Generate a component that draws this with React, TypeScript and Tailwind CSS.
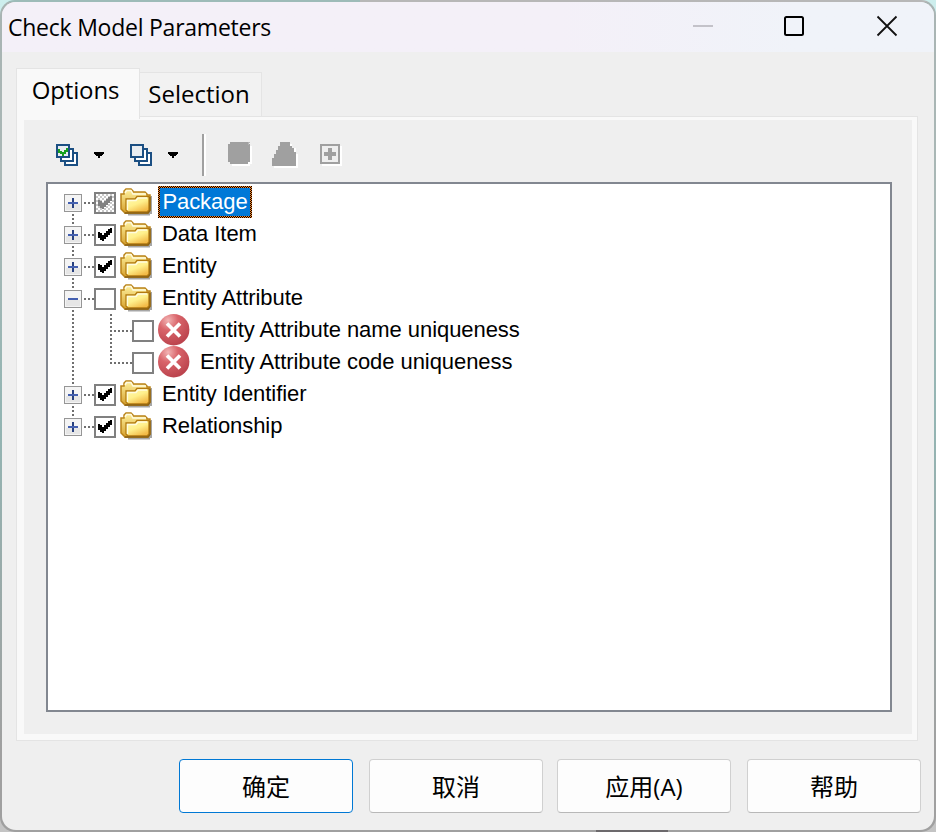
import React from "react";

const ui = "font-['Open_Sans','Noto_Sans_CJK_SC',sans-serif]";

function Folder() {
  return (
    <svg width="32" height="32" viewBox="0 0 32 32" className="shrink-0">
      <defs>
        <linearGradient id="front" x1="0" y1="0" x2="0.6" y2="1">
          <stop offset="0" stopColor="#fffbb4" />
          <stop offset="0.55" stopColor="#fff08c" />
          <stop offset="1" stopColor="#f3bb48" />
        </linearGradient>
        <linearGradient id="back" x1="0" y1="0" x2="0" y2="1">
          <stop offset="0" stopColor="#fff3a0" />
          <stop offset="1" stopColor="#d6a02c" />
        </linearGradient>
      </defs>
      <path d="M4 26V28H8V29.500H30V28H32V10H29V26Z" fill="#a6a6a6" />
      <path d="M1 8H4V5L6 3H11L13 5V6H25L27 8V9H30V24L28 27H5L1 23Z" fill="url(#back)" stroke="#b98218" strokeWidth="1.5" />
      <path d="M5 7L6.500 4.500H11L13 8H26" fill="none" stroke="#fffbe0" strokeWidth="1.500" />
      <path d="M6 13H15L17 10.500H29V24L27 26H8L6 24Z" fill="url(#front)" stroke="#b37a10" strokeWidth="1.3" />
      <path d="M7.500 24V14.500H16L18 12H27" fill="none" stroke="#fffce0" strokeWidth="1.300" />
      <path d="M5 27H28L30 24.500V11" fill="none" stroke="#8a6114" strokeWidth="1.3" />
    </svg>
  );
}

function ErrorIcon() {
  return (
    <svg width="32" height="32" viewBox="0 0 32 32" className="shrink-0">
      <defs>
        <radialGradient id="ball" cx="0.32" cy="0.2" r="0.8">
          <stop offset="0" stopColor="#f2b4b4" />
          <stop offset="0.4" stopColor="#d9646a" />
          <stop offset="1" stopColor="#bc444e" />
        </radialGradient>
      </defs>
      <circle cx="15.700" cy="15.700" r="15.700" fill="url(#ball)" />
      <path d="M9 9.500L22 22.500M22 9.500L9 22.500" stroke="#fff" strokeWidth="3.6" />
    </svg>
  );
}

function Check({ state }: { state: string }) {
  const color = state === "mixed" ? "#808080" : "#000";
  return (
    <svg width="22" height="32" viewBox="0 0 22 32" className="shrink-0" shapeRendering="crispEdges">
      <defs>
        <pattern id="mix" width="4" height="4" patternUnits="userSpaceOnUse">
          <path d="M0 0h2v2h-2zM2 2h2v2h-2z" fill="#c8c8c8" />
        </pattern>
      </defs>
      <rect x="1" y="7" width="20" height="20" fill="#fff" stroke="#808080" strokeWidth="2" />
      {state === "mixed" && <rect x="2" y="8" width="18" height="18" fill="url(#mix)" />}
      {state !== "off" && (
        <path d="M4 14H6V15H8V17H10V15H12V13H14V11H16V10H18V15H16V17H14V19H12V21H10V23H8V22H6V20H4Z" fill={color} />
      )}
    </svg>
  );
}

const dash = { stroke: "#6f6f6f", strokeWidth: 2, strokeDasharray: "2 2" };

function Expander({ open, first, last }: { open?: boolean; first?: boolean; last?: boolean }) {
  return (
    <svg width="30" height="32" viewBox="0 0 30 32" className="shrink-0" shapeRendering="crispEdges">
      {!first && <path d="M9 0V8" {...dash} />}
      {!last && <path d="M9 28V32" {...dash} />}
      <path d="M20 17H30" {...dash} />
      <rect x="0.5" y="8.5" width="17" height="17" fill="#f4f4f4" stroke="#969696" />
      <path d="M2 18H16V24H2Z" fill="#e6e6e6" />
      {!open && <path d="M9 12V22" stroke="#27407f" strokeWidth="2" />}
      <path d="M4 17H14" stroke="#4460b0" strokeWidth="2" />
    </svg>
  );
}

function ChildLines({ last }: { last?: boolean }) {
  return (
    <svg width="68" height="32" viewBox="0 0 68 32" className="shrink-0" shapeRendering="crispEdges">
      <path d="M9 0V32" {...dash} />
      <path d={last ? "M47 0V18" : "M47 0V32"} {...dash} />
      <path d="M50 17H68" {...dash} />
    </svg>
  );
}

function FocusFrame() {
  return (
    <svg width="94" height="32" viewBox="0 0 94 32" className="absolute inset-0" shapeRendering="crispEdges">
      <defs>
        <pattern id="dither" width="2" height="2" patternUnits="userSpaceOnUse">
          <rect width="2" height="2" fill="#000" />
          <path d="M0 0h1v1h-1zM1 1h1v1h-1z" fill="#ff8728" />
        </pattern>
      </defs>
      <path d="M0 0H94V32H0ZM2 2V30H92V2Z" fillRule="evenodd" fill="url(#dither)" />
    </svg>
  );
}

const rows = [
  { label: "Package", state: "mixed", first: true, selected: true },
  { label: "Data Item", state: "on" },
  { label: "Entity", state: "on" },
  { label: "Entity Attribute", state: "off", open: true },
  { label: "Entity Attribute name uniqueness", state: "off", child: true },
  { label: "Entity Attribute code uniqueness", state: "off", child: true, last: true },
  { label: "Entity Identifier", state: "on" },
  { label: "Relationship", state: "on", last: true },
];

function Stack({ checked }: { checked?: boolean }) {
  return (
    <svg width="22" height="22" viewBox="0 0 22 22" className="shrink-0" shapeRendering="crispEdges">
      <g fill="#fff" stroke="#1b4f83" strokeWidth="2">
        <rect x="9" y="9" width="12" height="12" />
        <rect x="5" y="5" width="12" height="12" />
        <rect x="1" y="1" width="12" height="12" fill="#e9edf1" />
      </g>
      {checked && <path d="M2 5H4V7H6V8H8V6H10V4H12V8H10V10H8V12H6V10H4V9H2Z" fill="#17a01f" />}
    </svg>
  );
}

function Caret() {
  return (
    <svg width="10" height="6" viewBox="0 0 10 6" shapeRendering="crispEdges">
      <path d="M0 0H10V2H9V3H8V4H6V6H4V4H2V3H1V2H0Z" />
    </svg>
  );
}

const button = "h-[54px] w-[174px] rounded border bg-[#fdfdfd]";

export default function App() {
  return (
    <div className="h-[832px] w-[936px] overflow-hidden bg-[linear-gradient(#cdeeed,#c4dddb_50%,#c4c4c4_90%)]">
      <div className="h-[832px] w-[936px] rounded-[15px] bg-[linear-gradient(#6c696c,#6c696c),linear-gradient(90deg,#9dbbb8_360px,#b7b7b7_360px),linear-gradient(#a9b4b3,#a9b8b6_25%,#93b5b3_50%,#a0a0a0_90%)] bg-[length:72px_2px,100%_2px,100%_100%] bg-[position:596px_830px,0_0,0_0] bg-no-repeat p-0.5">
        <div className="flex h-[828px] w-[932px] flex-col overflow-hidden rounded-[14px] bg-[#efefef] text-black">
          <header className={`flex h-[50px] shrink-0 items-center bg-gradient-to-r from-[#f4f0f8] from-60% to-[#f0f3f9] to-85% pl-[6px] ${ui}`}>
            <h1 className="w-[685px] whitespace-nowrap pt-px text-[23px] tracking-[-0.24px]">Check Model Parameters</h1>
            <svg className="-mt-0.5" width="206" height="22" viewBox="0 0 206 22">
              <path d="M0 11H20" stroke="#c3c2c9" strokeWidth="2" />
              <rect x="92" y="2" width="18" height="18" rx="1.5" fill="none" stroke="#000" strokeWidth="2" />
              <path d="M184.500 1.500L203.500 20.500M203.500 1.500L184.500 20.500" stroke="#111" strokeWidth="1.8" />
            </svg>
          </header>

          <nav className={`mt-4 flex h-[49px] items-end pl-[14px] text-[24px] ${ui}`}>
            <div className="relative z-10 -mb-[2px] flex h-[51px] w-[124px] items-center justify-center whitespace-nowrap border border-b-0 border-[#e4e4e4] bg-[#f9f9f9] pr-[5px] pb-2 tracking-[-0.15px]">Options</div>
            <div className="flex h-[45px] w-[122px] items-center justify-center whitespace-nowrap border border-b-0 border-l-0 border-[#e4e4e4] bg-[#f2f2f2] pr-[3px] pb-0.5">Selection</div>
          </nav>

          <main className="-mt-px ml-[14px] h-[625px] w-[902px] border border-[#e4e4e4] bg-[#f9f9f9] pt-[3px] pl-[7px]">
            <div className="h-[614px] w-[888px] bg-[#efefef] pl-[22px]">
              <div className="flex h-[62px] items-center pt-2 pl-[10px]">
                <Stack checked />
                <span className="ml-4"><Caret /></span>
                <span className="ml-[26px]"><Stack /></span>
                <span className="ml-4"><Caret /></span>
                <i className="ml-6 h-[42px] w-1 border-r-2 border-l-2 border-r-white border-l-[#a0a0a0]" />
                <svg className="-mt-0.5 ml-[22px]" width="114" height="28" viewBox="0 0 114 28" shapeRendering="crispEdges">
                  <path d="M4 4H22V6H24V24H22V26H4V24H2V4Z" fill="#fff" />
                  <path d="M2 2H20V4H22V22H20V24H2V22H0V4H2Z" fill="#a0a0a0" />
                  <path d="M20 2H22V3H21V5H20Z" fill="#b4b4b4" />
                  <path d="M54 4H64V8H68V14H70V28H46V20H54Z" fill="#fff" />
                  <path d="M52 2H62V6H64V8H66V12H68V26H44V18H46V14H48V10H50V6H52Z" fill="#a0a0a0" />
                  <path d="M95 7H113V25H95Z" fill="none" stroke="#fff" strokeWidth="2" />
                  <path d="M93 5H111V23H93Z" fill="#efefef" stroke="#a0a0a0" strokeWidth="2" />
                  <path d="M96 14H108M102 8V20" stroke="#a0a0a0" strokeWidth="4" />
                </svg>
              </div>
              <ul className="h-[530px] w-[846px] border-2 border-[#828790] bg-white pt-0.5 pl-4 font-['Liberation_Sans',Arial,sans-serif] text-[22px] tracking-[-0.06px]">
                {rows.map((r) => (
                  <li key={r.label} className="flex h-8 items-center">
                    {r.child ? <ChildLines last={r.last} /> : <Expander open={r.open} first={r.first} last={r.last} />}
                    <Check state={r.state} />
                    <span className="ml-1">{r.child ? <ErrorIcon /> : <Folder />}</span>
                    {r.selected ? (
                      <span className="relative ml-1.5 flex h-8 w-[94px] items-center justify-center bg-[#0078d7] pb-px text-white">
                        {r.label}
                        <FocusFrame />
                      </span>
                    ) : (
                      <span className="ml-2.5 whitespace-nowrap pb-px">{r.label}</span>
                    )}
                  </li>
                ))}
              </ul>
            </div>
          </main>

          <footer className="mt-[18px] flex pl-[177px] font-['Noto_Sans_CJK_SC',sans-serif] text-[24px]">
            <button className={`${button} border-[#0078d4]`}>确定</button>
            <button className={`${button} ml-4 border-[#d0d0d0] border-b-[#b8b8b8]`}>取消</button>
            <button className={`${button} ml-[14px] border-[#d0d0d0] border-b-[#b8b8b8]`}>
              应用<span className="font-['Open_Sans',sans-serif]">(A)</span>
            </button>
            <button className={`${button} ml-4 border-[#d0d0d0] border-b-[#b8b8b8]`}>帮助</button>
          </footer>
        </div>
      </div>
    </div>
  );
}
